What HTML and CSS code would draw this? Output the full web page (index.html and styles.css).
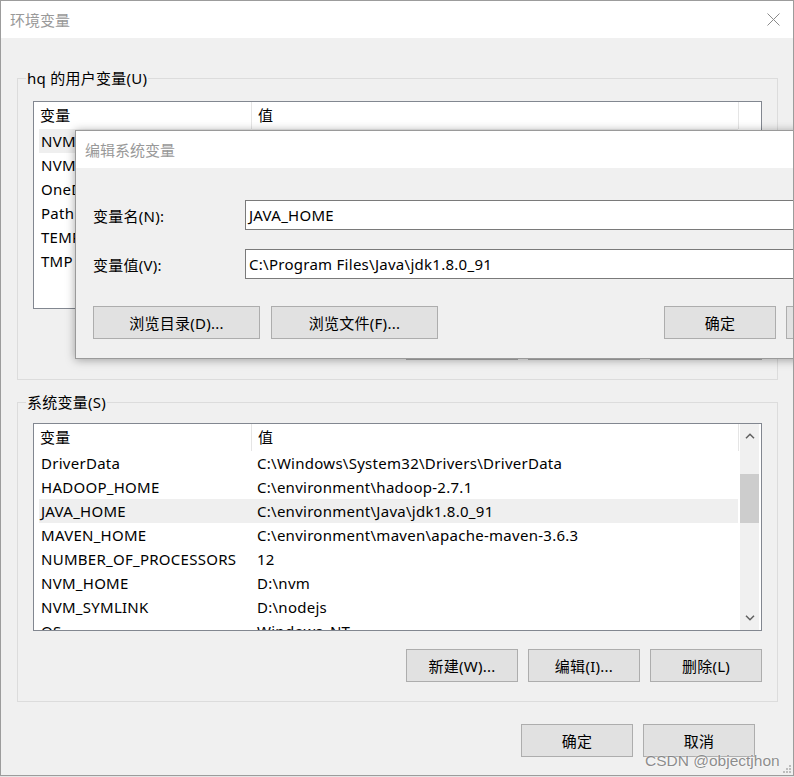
FILE: index.html
```html
<!DOCTYPE html>
<html lang="zh-CN">
<head>
    <meta charset="UTF-8">
    <title>环境变量</title>
    <link rel="stylesheet" href="styles.css">
</head>
<body>
    <div class="window">
        <div class="titlebar">
            <span class="title">环境变量</span>
            <svg class="close" viewBox="0 0 13 13">
                <path d="M0.5 0.5L12.5 12.5M12.5 0.5L0.5 12.5" stroke="#8a8a8a" stroke-width="1" fill="none"></path>
            </svg>
        </div>

        <div class="content">
            <div class="group">
                <div class="group-title">hq 的用户变量(U)</div>
                <div class="list list-user">
                    <div class="list-main">
                        <div class="list-head">
                            <div class="head-cell col-name">变量</div>
                            <div class="head-cell col-value">值</div>
                            <div class="head-cell col-rest"></div>
                        </div>
                        <div class="rows">
                            <div class="row selected"><div class="cell-name">NVM_HOME</div><div class="cell-value">D:\nvm</div></div>
                            <div class="row"><div class="cell-name">NVM_SYMLINK</div><div class="cell-value">D:\nodejs</div></div>
                            <div class="row"><div class="cell-name">OneDrive</div><div class="cell-value">C:\Users\hq\OneDrive</div></div>
                            <div class="row"><div class="cell-name">Path</div><div class="cell-value">C:\Users\hq\AppData\Local\Microsoft\WindowsApps;</div></div>
                            <div class="row"><div class="cell-name">TEMP</div><div class="cell-value">C:\Users\hq\AppData\Local\Temp</div></div>
                            <div class="row"><div class="cell-name">TMP</div><div class="cell-value">C:\Users\hq\AppData\Local\Temp</div></div>
                        </div>
                    </div>
                </div>
                <div class="buttons">
                    <button class="btn">新建(N)...</button>
                    <button class="btn">编辑(E)...</button>
                    <button class="btn">删除(D)</button>
                </div>
            </div>

            <div class="group">
                <div class="group-title">系统变量(S)</div>
                <div class="list list-sys">
                    <div class="list-main">
                        <div class="list-head">
                            <div class="head-cell col-name">变量</div>
                            <div class="head-cell col-value">值</div>
                        </div>
                        <div class="rows">
                            <div class="row"><div class="cell-name">DriverData</div><div class="cell-value">C:\Windows\System32\Drivers\DriverData</div></div>
                            <div class="row"><div class="cell-name">HADOOP_HOME</div><div class="cell-value">C:\environment\hadoop-2.7.1</div></div>
                            <div class="row selected"><div class="cell-name">JAVA_HOME</div><div class="cell-value">C:\environment\Java\jdk1.8.0_91</div></div>
                            <div class="row"><div class="cell-name">MAVEN_HOME</div><div class="cell-value">C:\environment\maven\apache-maven-3.6.3</div></div>
                            <div class="row"><div class="cell-name">NUMBER_OF_PROCESSORS</div><div class="cell-value">12</div></div>
                            <div class="row"><div class="cell-name">NVM_HOME</div><div class="cell-value">D:\nvm</div></div>
                            <div class="row"><div class="cell-name">NVM_SYMLINK</div><div class="cell-value">D:\nodejs</div></div>
                            <div class="row"><div class="cell-name">OS</div><div class="cell-value">Windows_NT</div></div>
                            <div class="row"><div class="cell-name">Path</div><div class="cell-value">C:\Windows\system32;C:\Windows;</div></div>
                        </div>
                    </div>
                    <div class="scrollbar">
                        <div class="sb-arrow">
                            <svg width="10" height="6" viewBox="0 0 10 6"><polyline points="1,5.3 5,1.3 9,5.3" fill="none" stroke="#606060" stroke-width="1.5"></polyline></svg>
                        </div>
                        <div class="sb-track"><div class="sb-thumb"></div></div>
                        <div class="sb-arrow">
                            <svg width="10" height="6" viewBox="0 0 10 6"><polyline points="1,0.7 5,4.7 9,0.7" fill="none" stroke="#606060" stroke-width="1.5"></polyline></svg>
                        </div>
                    </div>
                </div>
                <div class="buttons">
                    <button class="btn">新建(W)...</button>
                    <button class="btn">编辑(I)...</button>
                    <button class="btn">删除(L)</button>
                </div>
            </div>

            <div class="footer">
                <button class="btn">确定</button>
                <button class="btn">取消</button>
            </div>
        </div>

        <!-- edit dialog sits on top of the main window -->
        <div class="dialog">
            <div class="dialog-titlebar">
                <span class="title">编辑系统变量</span>
            </div>
            <div class="dialog-body">
                <div class="field">
                    <div class="field-label">变量名(N):</div>
                    <div class="field-input">JAVA_HOME</div>
                </div>
                <div class="field">
                    <div class="field-label">变量值(V):</div>
                    <div class="field-input">C:\Program Files\Java\jdk1.8.0_91</div>
                </div>
                <div class="dialog-buttons">
                    <button class="btn btn-wide">浏览目录(D)...</button>
                    <button class="btn btn-wide">浏览文件(F)...</button>
                    <button class="btn btn-ok">确定</button>
                    <button class="btn">取消</button>
                </div>
            </div>
        </div>

        <div class="watermark">CSDN @objectjhon</div>
        <svg class="grip" width="10" height="10" viewBox="0 0 10 10">
            <rect x="8" y="2" width="2" height="2"></rect>
            <rect x="5" y="5" width="2" height="2"></rect>
            <rect x="8" y="5" width="2" height="2"></rect>
            <rect x="2" y="8" width="2" height="2"></rect>
            <rect x="5" y="8" width="2" height="2"></rect>
            <rect x="8" y="8" width="2" height="2"></rect>
        </svg>
    </div>
</body>
</html>
```

FILE: styles.css
```css
* {
    box-sizing: border-box;
}
body {
    margin: 0;
    background: #e6e6e6;
    font-family: "Noto Sans", "Noto Sans CJK SC", sans-serif;
    font-size: 15px;
    letter-spacing: 0.27px;
    color: #000;
}
.window {
    position: relative;
    width: 794px;
    height: 776px;
    border: 1px solid #9c9c9c;
    background: #f0f0f0;
    overflow: hidden;
}
.titlebar {
    height: 37px;
    background: #fff;
    display: flex;
    align-items: center;
    padding-left: 9px;
}
.title {
    color: #999;
    line-height: 20px;
    letter-spacing: 0;
}
.close {
    margin-left: auto;
    margin-right: 13px;
    width: 13px;
    height: 13px;
}
.content {
    padding: 40px 15px 0 16px;
}

/* group boxes */
.group {
    border: 1px solid #dcdcdc;
    padding: 0 15px 19px;
}
.group + .group {
    margin-top: 22px;
}
.group-title {
    width: fit-content;
    height: 20px;
    line-height: 20px;
    margin: -11px 0 0 -7px;
    padding: 0 1px;
    background: #f0f0f0;
}

/* list views */
.list {
    display: flex;
    height: 208px;
    margin-top: 13px;
    border: 1px solid #828790;
    background: #fff;
    overflow: hidden;
}
.list-sys {
    margin-top: 11px;
}
.list-main {
    flex: 1;
    min-width: 0;
    overflow: hidden;
}
.list-head {
    display: flex;
    height: 27px;
}
.head-cell {
    line-height: 27px;
    padding-left: 6px;
    border-right: 1px solid #e5e5e5;
}
.col-name {
    width: 218px;
}
.col-value {
    width: 487px;
}
.col-rest {
    flex: 1;
    border-right: none;
}
.rows {
    padding-left: 5px;
}
.row {
    display: flex;
    width: 699px;
    height: 24px;
    line-height: 24px;
    white-space: nowrap;
}
.row.selected {
    background: #efefef;
}
.cell-name {
    width: 212px;
    padding-left: 2px;
    overflow: hidden;
}
.cell-value {
    flex: 1;
    padding-left: 6px;
    overflow: hidden;
}

.scrollbar {
    width: 19px;
    margin-right: 2px;
    background: #f0f0f0;
    display: flex;
    flex-direction: column;
}
.sb-arrow {
    height: 24px;
    display: flex;
    align-items: center;
    justify-content: center;
}
.sb-track {
    flex: 1;
}
.sb-thumb {
    height: 49px;
    margin-top: 26px;
    background: #cdcdcd;
}

/* buttons */
.btn {
    width: 112px;
    height: 33px;
    padding: 0;
    border: 1px solid #adadad;
    background: #e1e1e1;
    font-family: inherit;
    font-size: 15px;
    letter-spacing: inherit;
    color: #000;
}
.buttons {
    display: flex;
    justify-content: flex-end;
    gap: 10px;
    margin-top: 18px;
}
.footer {
    display: flex;
    justify-content: flex-end;
    gap: 10px;
    margin-top: 22px;
    padding-right: 23px;
}

/* edit dialog */
.dialog {
    position: absolute;
    left: 74px;
    top: 129px;
    width: 840px;
    height: 229px;
    border: 1px solid #9a9a9a;
    background: #f0f0f0;
    box-shadow: 0 1px 9px rgba(0, 0, 0, 0.35);
}
.dialog-titlebar {
    height: 37px;
    background: #fff;
    display: flex;
    align-items: center;
    padding-left: 9px;
}
.dialog-body {
    padding: 32px 16px 0 17px;
}
.field {
    display: flex;
    align-items: center;
    height: 30px;
}
.field + .field {
    margin-top: 19px;
}
.field-label {
    width: 152px;
}
.field-input {
    flex: 1;
    height: 30px;
    line-height: 28px;
    padding-left: 3px;
    border: 1px solid #7a7a7a;
    background: #fff;
    white-space: nowrap;
}
.dialog-buttons {
    display: flex;
    gap: 10px;
    margin-top: 27px;
}
.btn-wide {
    width: 167px;
}
.btn-wide + .btn-wide {
    margin-left: 1px;
}
.btn-ok {
    margin-left: auto;
}

.watermark {
    position: absolute;
    left: 644px;
    top: 752px;
    font-family: "Liberation Sans", sans-serif;
    font-size: 15.5px;
    line-height: 16px;
    letter-spacing: 0;
    color: rgba(120, 120, 120, 0.85);
    text-shadow: 0 0 2px #fff;
}
.grip {
    position: absolute;
    right: 2px;
    bottom: 2px;
    fill: #bdbdbd;
}
```
